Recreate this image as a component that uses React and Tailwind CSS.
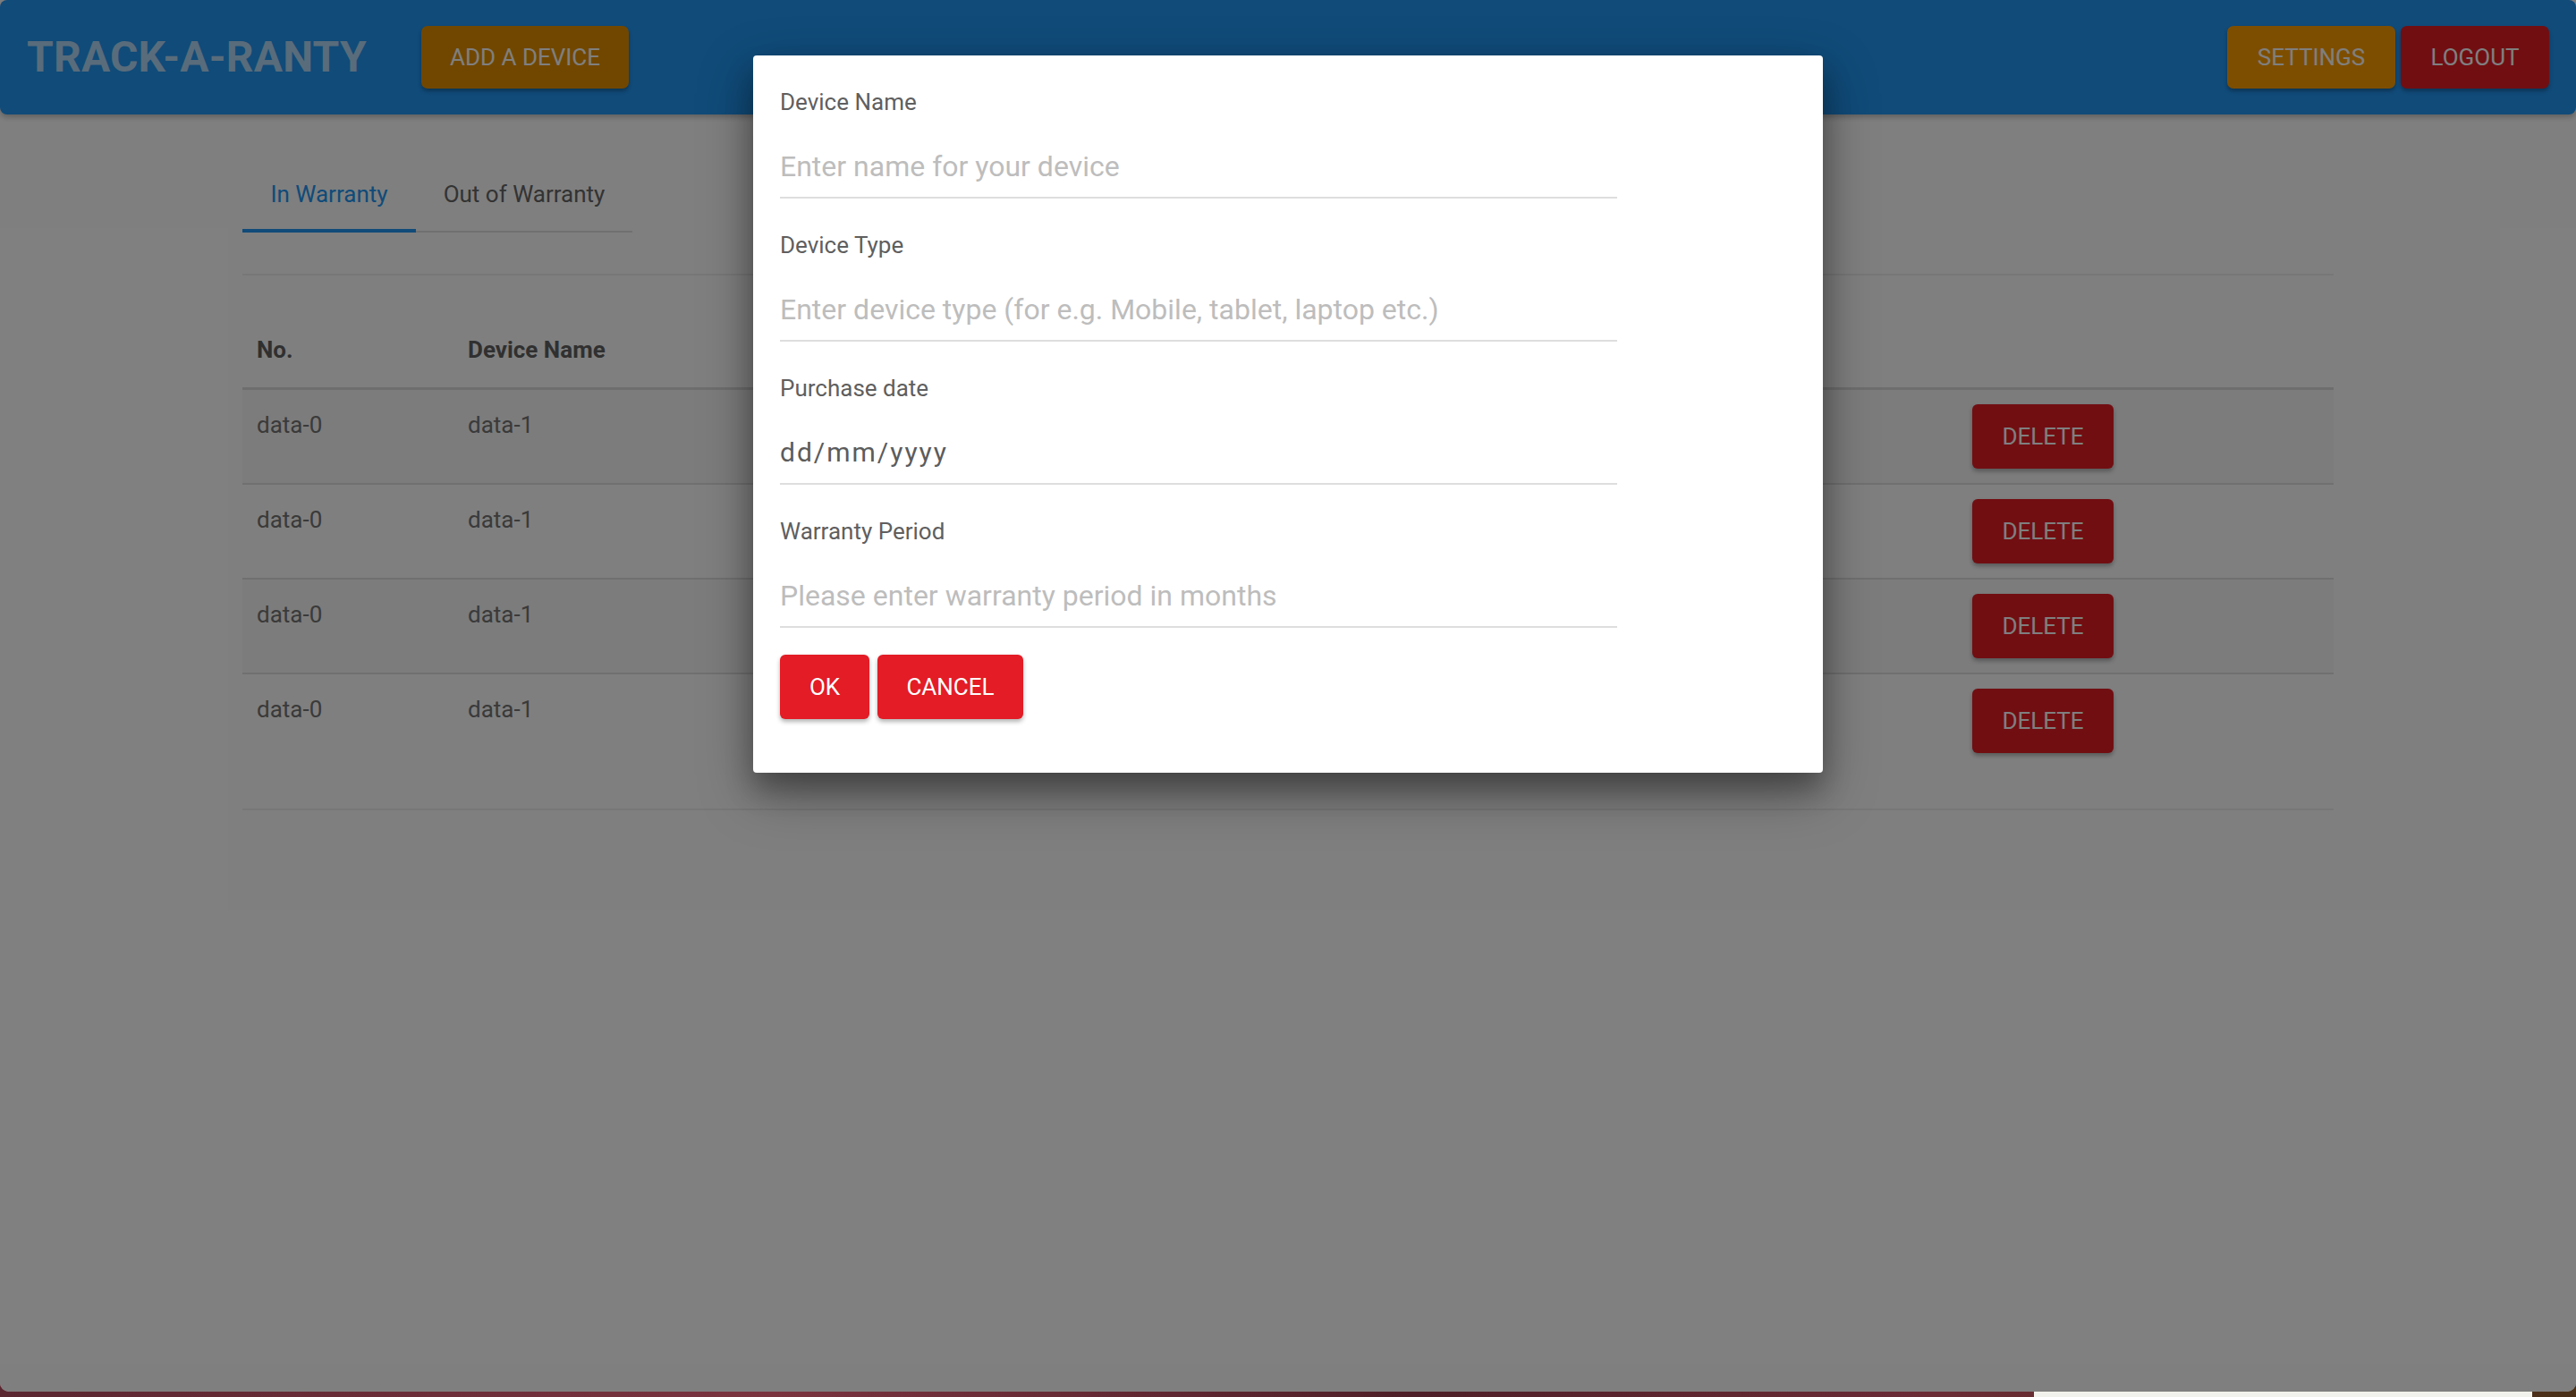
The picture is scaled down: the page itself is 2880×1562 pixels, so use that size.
import React from "react";

/*
 * Track-a-Ranty dashboard with the "add a device" dialog open.
 * Page is laid out at 2x (retina-sized) numbers to match the capture.
 * Middle table columns sit entirely under the dialog, so they are left blank.
 */

const rows = [0, 1, 2, 3];

const HeaderButton = ({ children, className }) => (
  <button
    className={`h-[70px] rounded-[7px] text-[26px] uppercase text-white shadow-[0_3px_4px_rgba(0,0,0,0.3)] ${className}`}
  >
    {children}
  </button>
);

const Field = ({ label, placeholder, value, first }) => (
  <div className={first ? "" : "mt-[34px]"}>
    <label className="block text-[26px] leading-[36px] text-[#5f5f5f]">{label}</label>
    {value ? (
      <div className="mt-[19px] flex h-[71px] w-[936px] items-center border-b-2 border-[#dedede] text-[30px] leading-[40px] tracking-[2px] text-[#5c5c5c]">
        {value}
      </div>
    ) : (
      <input
        type="text"
        placeholder={placeholder}
        className="mt-[19px] block h-[71px] w-[936px] border-b-2 border-[#dedede] bg-transparent text-[32px] leading-[40px] text-[#333] outline-none placeholder:text-[#bdbdbd]"
      />
    )}
  </div>
);

const AddDeviceDialog = () => (
  <div className="absolute inset-0 flex justify-center bg-black/50 pt-[62px]">
    <div className="h-[802px] w-[1196px] rounded-[4px] bg-white px-[30px] pb-[60px] pt-[34px] shadow-[0_22px_60px_rgba(0,0,0,0.35),0_18px_30px_rgba(0,0,0,0.25)]">
      <Field first label="Device Name" placeholder="Enter name for your device" />
      <Field label="Device Type" placeholder="Enter device type (for e.g. Mobile, tablet, laptop etc.)" />
      <Field label="Purchase date" value="dd/mm/yyyy" />
      <Field label="Warranty Period" placeholder="Please enter warranty period in months" />
      <div className="mt-[30px] flex gap-[9px]">
        <button className="h-[72px] w-[100px] rounded-[6px] bg-[#e31c25] text-[26px] uppercase text-white shadow-[0_3px_5px_rgba(0,0,0,0.3)]">
          OK
        </button>
        <button className="h-[72px] w-[163px] rounded-[6px] bg-[#e31c25] text-[26px] uppercase text-white shadow-[0_3px_5px_rgba(0,0,0,0.3)]">
          Cancel
        </button>
      </div>
    </div>
  </div>
);

export default function App() {
  return (
    <div className="flex h-[1562px] w-full flex-col overflow-hidden bg-[linear-gradient(90deg,#5a2630,#7a3440_30%,#4e1f28_55%,#6b2c36_75%,#4a3018)] font-['Roboto',sans-serif]">
      <div className="relative h-[1556px] w-full shrink-0 overflow-hidden rounded-b-[10px] bg-white">
        <header className="flex h-[128px] items-center rounded-[8px] bg-[#2196f3] pl-[30px] pr-[30px] shadow-[0_3px_6px_rgba(0,0,0,0.25)]">
          <span className="w-[441px] text-[48px] font-bold tracking-[0.2px] text-[#b3d8f6]">TRACK-A-RANTY</span>
          <HeaderButton className="w-[232px] bg-[#e28e00]">Add a device</HeaderButton>
          <div className="ml-auto flex gap-[6px]">
            <HeaderButton className="w-[188px] bg-[#fd9d00]">Settings</HeaderButton>
            <HeaderButton className="w-[166px] bg-[#e31c25]">Logout</HeaderButton>
          </div>
        </header>

        <main className="mx-auto w-[2338px] pt-[34px]">
          <div className="flex w-[436px] border-b-2 border-[#e0e0e0]">
            <div className="relative flex h-[96px] w-[194px] items-center justify-center pt-[14px] text-[26px] text-[#2196f3]">
              In Warranty
              <span className="absolute -bottom-[2px] left-0 h-[4px] w-full bg-[#2196f3]" />
            </div>
            <div className="flex h-[96px] w-[242px] items-center justify-center pt-[14px] text-[26px] text-[#666]">
              Out of Warranty
            </div>
          </div>

          <div className="mt-[46px] h-[2px] bg-[#eeeeee]" />

          <table className="mt-[32px] w-full table-fixed border-separate border-spacing-0 text-[26px]">
            <colgroup>
              <col className="w-[236px]" />
              <col className="w-[360px]" />
              <col className="w-[380px]" />
              <col className="w-[380px]" />
              <col className="w-[562px]" />
              <col />
            </colgroup>
            <thead>
              <tr className="text-left font-bold text-[#616161]">
                {["No.", "Device Name", "", "", "", ""].map((h, i) => (
                  <th
                    key={i}
                    className="border-b-[3px] border-[#dcdcdc] px-[16px] pb-[23px] pt-[33px] align-top leading-[37px]"
                  >
                    {h}
                  </th>
                ))}
              </tr>
            </thead>
            <tbody>
              {rows.map((r) => {
                const border = r < rows.length - 1 ? "border-b-2 border-[#e0e0e0]" : "";
                return (
                  <tr key={r} className={r % 2 === 0 ? "bg-[#f8f8f8]" : ""}>
                    {["data-0", "data-1", "", "", ""].map((d, i) => (
                      <td key={i} className={`${border} px-[16px] pt-[21px] align-top leading-[37px] text-[#757575]`}>
                        {d}
                      </td>
                    ))}
                    <td className={`${border} px-[16px] py-[16px] align-top`}>
                      <button className="h-[72px] w-[158px] rounded-[6px] bg-[#e31c25] text-[26px] uppercase text-white shadow-[0_3px_5px_rgba(0,0,0,0.3)]">
                        Delete
                      </button>
                    </td>
                  </tr>
                );
              })}
            </tbody>
          </table>

          <div className="mt-[46px] h-[2px] bg-[#eeeeee]" />
        </main>

        <AddDeviceDialog />
      </div>
      <div className="flex h-[6px] w-full">
        <div className="w-[2274px]" />
        <div className="w-[557px] bg-[#f2f2ec]" />
      </div>
    </div>
  );
}
